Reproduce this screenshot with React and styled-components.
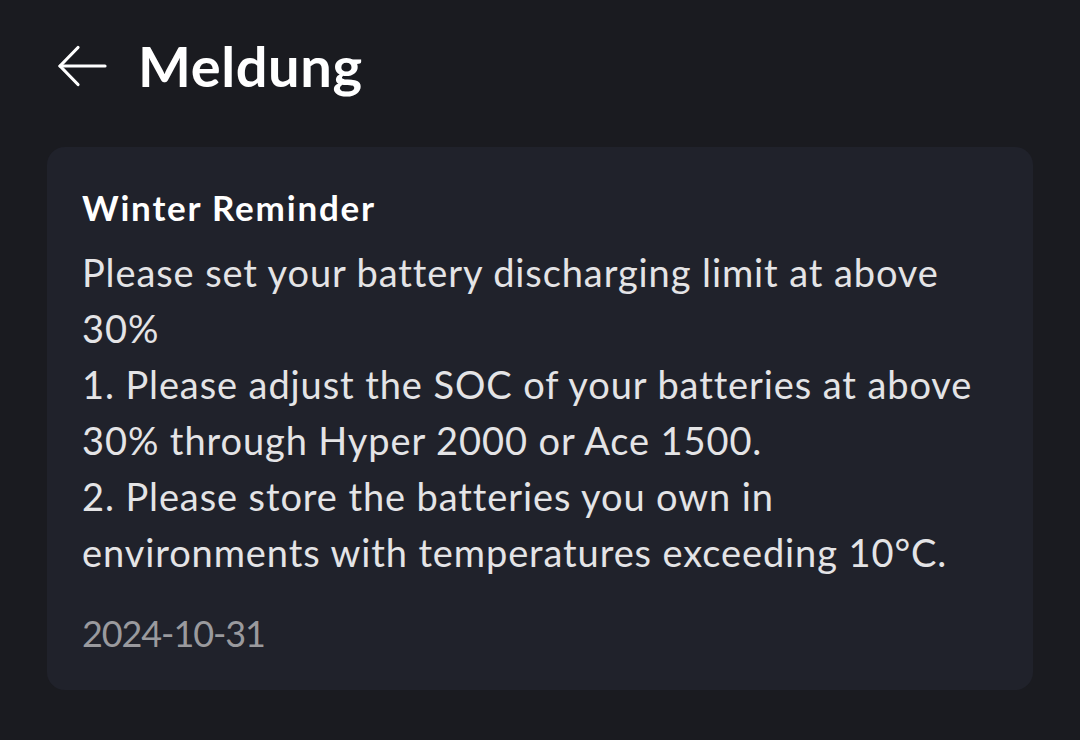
import React from "react";
import styled, { createGlobalStyle } from "styled-components";

const Global = createGlobalStyle`
  html, body { margin: 0; padding: 0; background: #1a1b20; }
  body { font-family: Lato, "Noto Sans", sans-serif; -webkit-font-smoothing: antialiased; }
`;

const Page = styled.div`
  width: 1080px;
  height: 740px;
  background: #1a1b20;
  box-sizing: border-box;
  padding: 28px 47px 0 47px;
  display: flex;
  flex-direction: column;
`;

const Header = styled.div`
  display: flex;
  align-items: center;
  height: 76px;
  gap: 31px;
  padding-left: 10px;
`;

const BackButton = styled.button`
  background: none;
  border: none;
  padding: 0;
  width: 50px;
  height: 50px;
  display: flex;
  align-items: center;
  justify-content: center;
  color: #ffffff;
  cursor: pointer;
`;

const Title = styled.h1`
  margin: 0;
  font-size: 56px;
  font-weight: 700;
  color: #ffffff;
  letter-spacing: 0.6px;
  line-height: 76px;
`;

const Card = styled.div`
  margin-top: 43px;
  background: #20222b;
  border-radius: 18px;
  padding: 34px 35px 29px 35px;
  display: flex;
  flex-direction: column;
`;

const CardTitle = styled.div`
  font-size: 35px;
  font-weight: 700;
  color: #ffffff;
  line-height: 52px;
  letter-spacing: 1.8px;
`;

const Body = styled.div`
  font-size: 38px;
  color: #e4e4e6;
  line-height: 56px;
  margin-top: 11px;
  letter-spacing: 0.9px;
  white-space: nowrap;
`;

const DateText = styled.div`
  font-size: 36px;
  color: #9a9a9e;
  margin-top: 25px;
  line-height: 56px;
  letter-spacing: -1.1px;
`;

export default function App() {
  return (
    <>
      <Global />
      <Page>
        <Header>
          <BackButton aria-label="Zurück">
            <svg width="50" height="42" viewBox="0 0 50 42" fill="none" stroke="#fff" strokeWidth="3.2" strokeLinecap="round" strokeLinejoin="round">
              <path d="M48 21H3" />
              <path d="M21 2.5L3 21L21 39.5" />
            </svg>
          </BackButton>
          <Title>Meldung</Title>
        </Header>
        <Card>
          <CardTitle>Winter Reminder</CardTitle>
          <Body>
            Please set your battery discharging limit at above
            <br />30%
            <br />1. Please adjust the SOC of your batteries at above
            <br />30% through Hyper 2000 or Ace 1500.
            <br />2. Please store the batteries you own in
            <br />environments with temperatures exceeding 10°C.
          </Body>
          <DateText>2024-10-31</DateText>
        </Card>
      </Page>
    </>
  );
}
